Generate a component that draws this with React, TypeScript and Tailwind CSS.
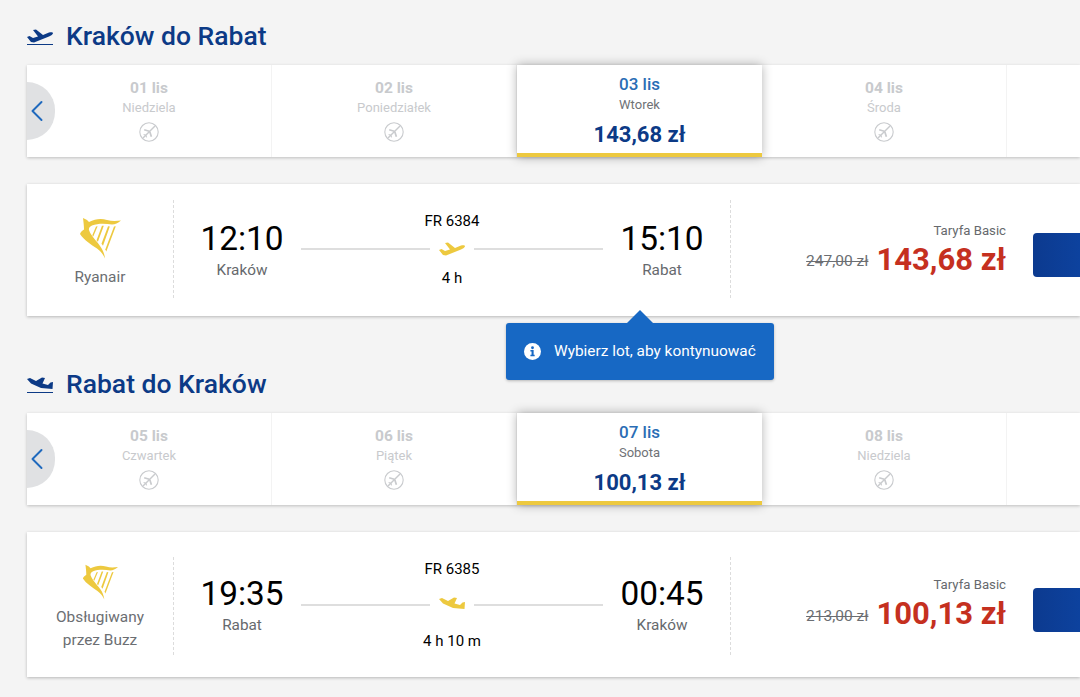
import { ChevronLeft } from 'lucide-react'

const font = { fontFamily: 'Roboto, sans-serif' }

type Day = { date: string; name: string; price?: string }

const outbound: Day[] = [
  { date: '01 lis', name: 'Niedziela' },
  { date: '02 lis', name: 'Poniedziałek' },
  { date: '03 lis', name: 'Wtorek', price: '143,68 zł' },
  { date: '04 lis', name: 'Środa' },
]

const inbound: Day[] = [
  { date: '05 lis', name: 'Czwartek' },
  { date: '06 lis', name: 'Piątek' },
  { date: '07 lis', name: 'Sobota', price: '100,13 zł' },
  { date: '08 lis', name: 'Niedziela' },
]

function PlaneIcon({ className, landing }: { className?: string; landing?: boolean }) {
  return (
    <svg viewBox="0 0 26 15" className={className} fill="currentColor">
      {landing ? (
        <path d="M0 2 3 1 9 4 15 .5 18 1 15.500 6.500 21 8 23.500 5.500 26 5 25.500 12 14 11 4 6.500Z" />
      ) : (
        <path d="M0 8 2.500 7 6 9 11 7.500 6 1 9 .5 16 6 22 3.500C24 3 26 3 26 4.300 26 5.500 24 6.500 22 7.500L7 13.500 4 13Z" />
      )}
    </svg>
  )
}

function NoFlightIcon() {
  return (
    <svg viewBox="0 0 20 20" className="h-5 w-5 text-[#c9cbce]" fill="none" stroke="currentColor">
      <circle cx="10" cy="10" r="9.2" strokeWidth="1.1" />
      <path d="M16 4 4 16" strokeWidth="1.400" />
      <path d="M10.300 9.200 5.200 7.800M10.800 9.700 12.400 14.800" strokeWidth="1.700" />
      <path d="M6.800 13.200 4.600 12.400M6.800 13.200 7.600 15.400" strokeWidth="1.100" />
    </svg>
  )
}

function HarpLogo({ className }: { className?: string }) {
  return (
    <svg viewBox="0 0 42 42" className={className} fill="#edc93f">
      <path d="M4 1 8 3 10 5C16 2 22 1 28 3 33 4.500 38 4 42 3.500 39 6 36 7.500 33 7.500 27 6.500 19 6 13 8.500 11 9.500 9.500 11 10 13 12 19 17 23 21 29 24 33 25.500 37 26 41.500 24.500 38 22 34.500 18 31.500 12 27.500 5 23 1 17 1.500 15 3 14 5 12.500 5 9 4.500 5 4 1Z" />
      <path d="M17 9.500 18.600 9.200 14.300 19.500 13.300 18.300Z" />
      <path d="M23 8.800 24.800 8.800 18.900 24.800 17.500 23.200Z" />
      <path d="M29 9.300 30.800 9.600 24 28.800 22.500 26.800Z" />
      <path d="M35 9.600 36.800 9.300 27.300 34.500 26.300 32.400Z" />
    </svg>
  )
}

function DateStrip({ days }: { days: Day[] }) {
  return (
    <div className="relative flex h-[92px] bg-white shadow-[0_1px_3px_rgba(0,0,0,0.22)]">
      <button className="absolute left-0 top-[17px] z-20 flex h-[58px] w-[28px] items-center rounded-r-full bg-[#e0e1e3] text-[#1f69bd]">
        <ChevronLeft size={36} strokeWidth={1.3} className="ml-[-8px] shrink-0" />
      </button>
      {days.map((day) =>
        day.price ? (
          <div
            key={day.date}
            className="relative z-10 flex w-[245px] shrink-0 flex-col items-center border-b-4 border-[#edc93f] bg-white pt-[9px] shadow-[0_0_10px_rgba(0,0,0,0.3)]"
          >
            <div className="text-[17px] font-medium leading-5 text-[#2a6db5]">{day.date}</div>
            <div className="mt-[2px] text-[13px] leading-[18px] text-[#6f7276]">{day.name}</div>
            <div className="mt-[7px] text-[22px] font-bold leading-7 text-[#0c3a86]">{day.price}</div>
          </div>
        ) : (
          <div key={day.date} className="flex w-[245px] shrink-0 flex-col items-center border-r border-[#f3f3f3] pt-[13px]">
            <div className="text-[15.5px] font-bold leading-5 text-[#c8cacd]">{day.date}</div>
            <div className="mt-[1px] text-[13px] leading-[18px] text-[#c8cacd]">{day.name}</div>
            <div className="mt-[5px]">
              <NoFlightIcon />
            </div>
          </div>
        ),
      )}
    </div>
  )
}

type Flight = {
  carrier: string[]
  logo: string
  number: string
  depart: string
  from: string
  arrive: string
  to: string
  duration: string
  oldPrice: string
  price: string
  height: string
  middle: string
  divider: string
  landing?: boolean
}

function FlightCard({ flight }: { flight: Flight }) {
  const divider = `h-[98px] w-0 shrink-0 self-start border-l border-dashed border-[#dcdcdc] ${flight.divider}`
  return (
    <div className={`flex items-center bg-white shadow-[0_1px_3px_rgba(0,0,0,0.25)] ${flight.height}`}>
      <div className="mt-[6px] flex w-[146px] shrink-0 flex-col items-center text-center text-[15.4px] leading-[23px] text-[#6b6e72]">
        <HarpLogo className={flight.logo} />
        {flight.carrier.map((line) => (
          <div key={line}>{line}</div>
        ))}
      </div>
      <div className={divider} />

      <div className="flex w-[556px] shrink-0 items-center pl-[26px] pr-[26px] text-black">
        <div className="w-[84px] text-center">
          <div className="text-[33.4px] leading-[38px]">{flight.depart}</div>
          <div className="mt-[2px] text-[15.3px] leading-5 text-[#66696d]">{flight.from}</div>
        </div>

        <div className={`mx-[17px] flex flex-1 flex-col items-center justify-between text-[15px] leading-5 ${flight.middle}`}>
          <div>{flight.number}</div>
          <div className="flex w-full items-center gap-[9px]">
            <div className="h-[2px] flex-1 bg-[#dedede]" />
            <PlaneIcon landing={flight.landing} className="h-[15px] w-[26px] text-[#edc93f]" />
            <div className="h-[2px] flex-1 bg-[#dedede]" />
          </div>
          <div>{flight.duration}</div>
        </div>

        <div className="w-[84px] text-center">
          <div className="text-[33.4px] leading-[38px]">{flight.arrive}</div>
          <div className="mt-[2px] text-[15.3px] leading-5 text-[#66696d]">{flight.to}</div>
        </div>
      </div>
      <div className={divider} />

      <div className="flex flex-1 items-center justify-between pl-[55px]">
        <div className="mt-[1px] flex w-[220px] shrink-0 flex-col items-end whitespace-nowrap">
          <div className="text-[13.2px] leading-[18px] text-[#66696d]">Taryfa Basic</div>
          <div className="flex items-center gap-[8px]">
            <span className="mt-[5px] text-[15.5px] text-[#6b6e72] line-through">{flight.oldPrice}</span>
            <span className="text-[31px] font-bold leading-[40px] text-[#c5301f]">{flight.price}</span>
          </div>
        </div>
        <button className="ml-[27px] mt-[10px] h-[44px] flex-1 rounded-l bg-gradient-to-r from-[#0c3a8f] to-[#0d429e]" />
      </div>
    </div>
  )
}

function RouteTitle({ title, landing }: { title: string; landing?: boolean }) {
  return (
    <div className="flex h-[30px] items-center gap-[13px] text-[#0c3a86]">
      <div className="mt-[4px] w-[26px]">
        <PlaneIcon landing={landing} className="h-[15px] w-[26px]" />
        <div className="h-[1.5px] bg-current" />
      </div>
      <h2 className="mt-[2px] text-[26.5px] font-medium leading-8">{title}</h2>
    </div>
  )
}

export default function App() {
  return (
    <div style={font} className="relative h-[697px] overflow-hidden bg-[#f4f4f4] pl-[27px] pt-5">
      <RouteTitle title="Kraków do Rabat" />
      <div className="mt-[15px]">
        <DateStrip days={outbound} />
      </div>
      <div className="mt-[27px]">
        <FlightCard
          flight={{
            carrier: ['Ryanair'],
            logo: 'h-[42px] w-[42px] mb-[7px]',
            number: 'FR 6384',
            depart: '12:10',
            from: 'Kraków',
            arrive: '15:10',
            to: 'Rabat',
            duration: '4 h',
            oldPrice: '247,00 zł',
            price: '143,68 zł',
            height: 'h-[132px]',
            middle: 'h-[77px] mt-[-2px]',
            divider: 'mt-[16px]',
          }}
        />
      </div>

      <div className="mt-[52px]">
        <RouteTitle title="Rabat do Kraków" landing />
      </div>
      <div className="mt-[15px]">
        <DateStrip days={inbound} />
      </div>
      <div className="mt-[27px]">
        <FlightCard
          flight={{
            carrier: ['Obsługiwany', 'przez Buzz'],
            logo: 'h-[36px] w-[36px] mb-[6px]',
            number: 'FR 6385',
            depart: '19:35',
            from: 'Rabat',
            arrive: '00:45',
            to: 'Kraków',
            duration: '4 h 10 m',
            oldPrice: '213,00 zł',
            price: '100,13 zł',
            height: 'h-[145px]',
            middle: 'h-[92px]',
            divider: 'mt-[25px]',
            landing: true,
          }}
        />
      </div>

      {/* tooltip over the first flight card */}
      <div className="absolute left-[506px] top-[323px] z-30 flex h-[57px] w-[268px] items-center gap-[13px] rounded-[3px] bg-[#1768c4] pl-[18px] text-[15.4px] text-white shadow-[0_1px_3px_rgba(0,0,0,0.25)]">
        <div className="absolute left-[121px] top-[-13px] h-0 w-0 border-x-[13px] border-b-[13px] border-x-transparent border-b-[#1768c4]" />
        <svg viewBox="0 0 18 18" className="h-[17px] w-[17px]">
          <circle cx="9" cy="9" r="9" fill="#fff" />
          <circle cx="9" cy="5" r="1.5" fill="#1768c4" />
          <path d="M6.800 7.500H10.200V12.500H11.300V14H6.800V12.500H8V9H6.800Z" fill="#1768c4" />
        </svg>
        <span>Wybierz lot, aby kontynuować</span>
      </div>
    </div>
  )
}
